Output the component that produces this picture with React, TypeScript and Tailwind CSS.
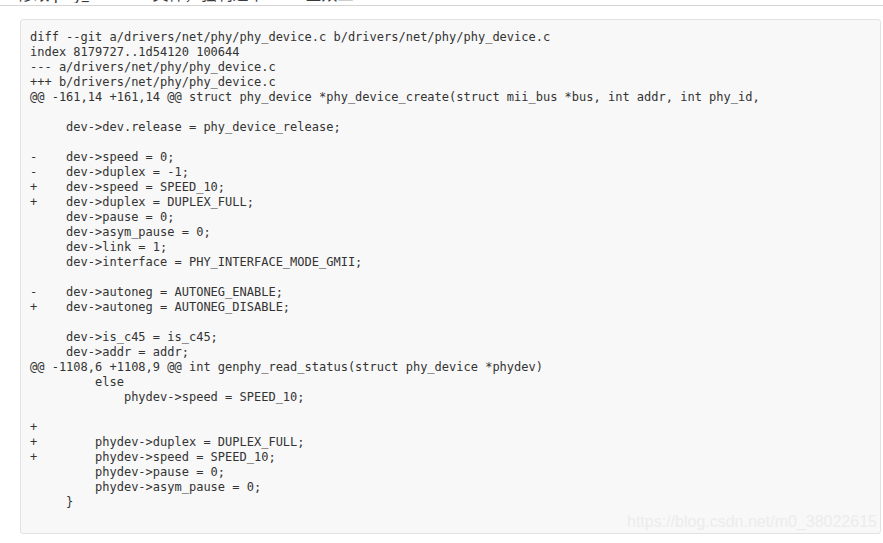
import React from "react";

const lines: string[] = [
  "diff --git a/drivers/net/phy/phy_device.c b/drivers/net/phy/phy_device.c",
  "index 8179727..1d54120 100644",
  "--- a/drivers/net/phy/phy_device.c",
  "+++ b/drivers/net/phy/phy_device.c",
  "@@ -161,14 +161,14 @@ struct phy_device *phy_device_create(struct mii_bus *bus, int addr, int phy_id,",
  "",
  "     dev->dev.release = phy_device_release;",
  "",
  "-    dev->speed = 0;",
  "-    dev->duplex = -1;",
  "+    dev->speed = SPEED_10;",
  "+    dev->duplex = DUPLEX_FULL;",
  "     dev->pause = 0;",
  "     dev->asym_pause = 0;",
  "     dev->link = 1;",
  "     dev->interface = PHY_INTERFACE_MODE_GMII;",
  "",
  "-    dev->autoneg = AUTONEG_ENABLE;",
  "+    dev->autoneg = AUTONEG_DISABLE;",
  "",
  "     dev->is_c45 = is_c45;",
  "     dev->addr = addr;",
  "@@ -1108,6 +1108,9 @@ int genphy_read_status(struct phy_device *phydev)",
  "         else",
  "             phydev->speed = SPEED_10;",
  "",
  "+",
  "+        phydev->duplex = DUPLEX_FULL;",
  "+        phydev->speed = SPEED_10;",
  "         phydev->pause = 0;",
  "         phydev->asym_pause = 0;",
  "     }",
];

export default function App() {
  return (
    <div className="relative w-[883px] h-[543px] overflow-hidden bg-white">
      <div className="h-[6px] w-[883px] overflow-hidden border-b border-[#d4d4d4]">
        <div className="h-[3px] overflow-hidden">
          <div
            className="-mt-[14px] text-[16px] leading-[16px] text-[#3a3a3a] whitespace-nowrap"
            style={{ fontFamily: '"Noto Sans", "Noto Sans CJK SC", sans-serif' }}
          >
            2. 修改 phy_device.c 文件，强制速率 10M 全双工
          </div>
        </div>
      </div>
      <div className="ml-[20px] mt-[13px] w-[861px] h-[515px] rounded-[3px] border border-[#e2e2e2] bg-[#f8f8f8] pl-[9px] pt-[10px]">
        <pre
          className="m-0 text-[12px] leading-[15px] text-[#333333]"
          style={{ fontFamily: '"DejaVu Sans Mono", "Liberation Mono", monospace' }}
        >
          {lines.map((l, i) => (
            <div key={i} className="h-[15px] whitespace-pre">
              {l}
            </div>
          ))}
        </pre>
      </div>
      <div
        className="absolute left-[627px] top-[512px] text-[16px] leading-[20px] text-[#ececec] whitespace-nowrap"
        style={{ fontFamily: '"Liberation Sans", Arial, sans-serif' }}
      >
        https://blog.csdn.net/m0_38022615
      </div>
    </div>
  );
}
